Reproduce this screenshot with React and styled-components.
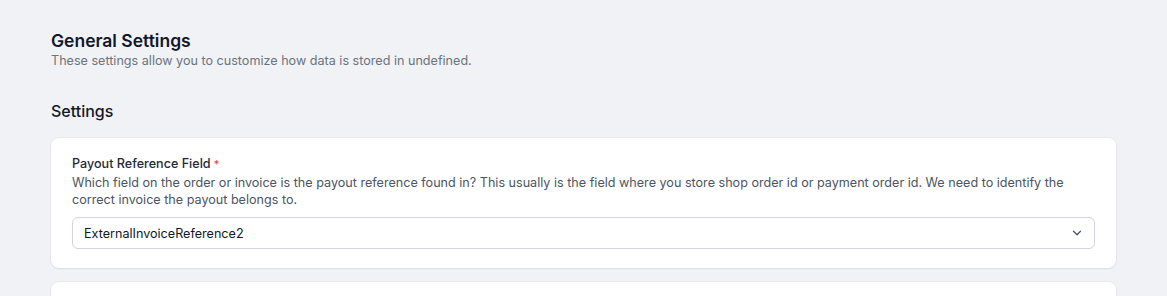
import React from 'react';
import styled, { createGlobalStyle } from "styled-components";

const GlobalStyle = createGlobalStyle`
  body {
    margin: 0;
    background: #f1f2f6;
    font-family: Inter, "Noto Sans", sans-serif;
    color: #111827;
  }
`;

const Page = styled.div`
  padding: 30px 51px 0;
`;

const Header = styled.div`
  margin-bottom: 31px;
`;

const Title = styled.h1`
  margin: 0;
  font-size: 17.5px;
  line-height: 22px;
  font-weight: 600;
  color: #111827;
`;

const Subtitle = styled.p`
  margin: 1px 0 0;
  font-size: 12.6px;
  line-height: 16px;
  color: #6b7280;
`;

const SectionTitle = styled.h2`
  margin: 0 0 16px;
  font-size: 16px;
  line-height: 22px;
  font-weight: 500;
  color: #111827;
`;

const Card = styled.div`
  background: #fff;
  border-radius: 8px;
  box-shadow: 0 1px 2px rgba(16, 24, 40, 0.08), 0 0 0 1px rgba(16, 24, 40, 0.03);
  padding: 17px 21px 19px;
  margin-bottom: 14px;
  min-height: ${p => p.$minHeight || 0}px;
`;

const Label = styled.div`
  font-size: 12.6px;
  line-height: 18px;
  font-weight: 500;
  color: #1f2937;
  margin-bottom: 1px;
`;

const Required = styled.span`
  color: #ef4444;
  font-size: 11px;
  vertical-align: top;
  margin-left: 3px;
`;

const Description = styled.p`
  margin: 0 0 9px;
  font-size: 12.6px;
  line-height: 17px;
  color: #4b5563;
`;

const SelectBox = styled.div`
  display: flex;
  align-items: center;
  justify-content: space-between;
  height: 32px;
  box-sizing: border-box;
  padding: 0 10px 0 11px;
  border: 1px solid #d1d5db;
  border-radius: 6px;
  background: #fff;
  font-size: 12.6px;
  color: #111827;
`;

const Chevron = () => (
  <svg width="14" height="14" viewBox="0 0 24 24" fill="none" stroke="#4b5563" strokeWidth="2.2" strokeLinecap="round" strokeLinejoin="round">
    <path d="m6 9 6 6 6-6" />
  </svg>
);

const App = () => {
  return (
    <Page>
      <GlobalStyle />
      <Header>
        <Title>General Settings</Title>
        <Subtitle>These settings allow you to customize how data is stored in undefined.</Subtitle>
      </Header>
      <SectionTitle>Settings</SectionTitle>
      <Card>
        <Label>Payout Reference Field<Required>*</Required></Label>
        <Description>
          Which field on the order or invoice is the payout reference found in? This usually is the field where you store shop order id or payment order id. We need to identify the correct invoice the payout belongs to.
        </Description>
        <SelectBox>
          ExternalInvoiceReference2
          <Chevron />
        </SelectBox>
      </Card>
      <Card $minHeight={60} />
    </Page>
  );
};

export default App;
